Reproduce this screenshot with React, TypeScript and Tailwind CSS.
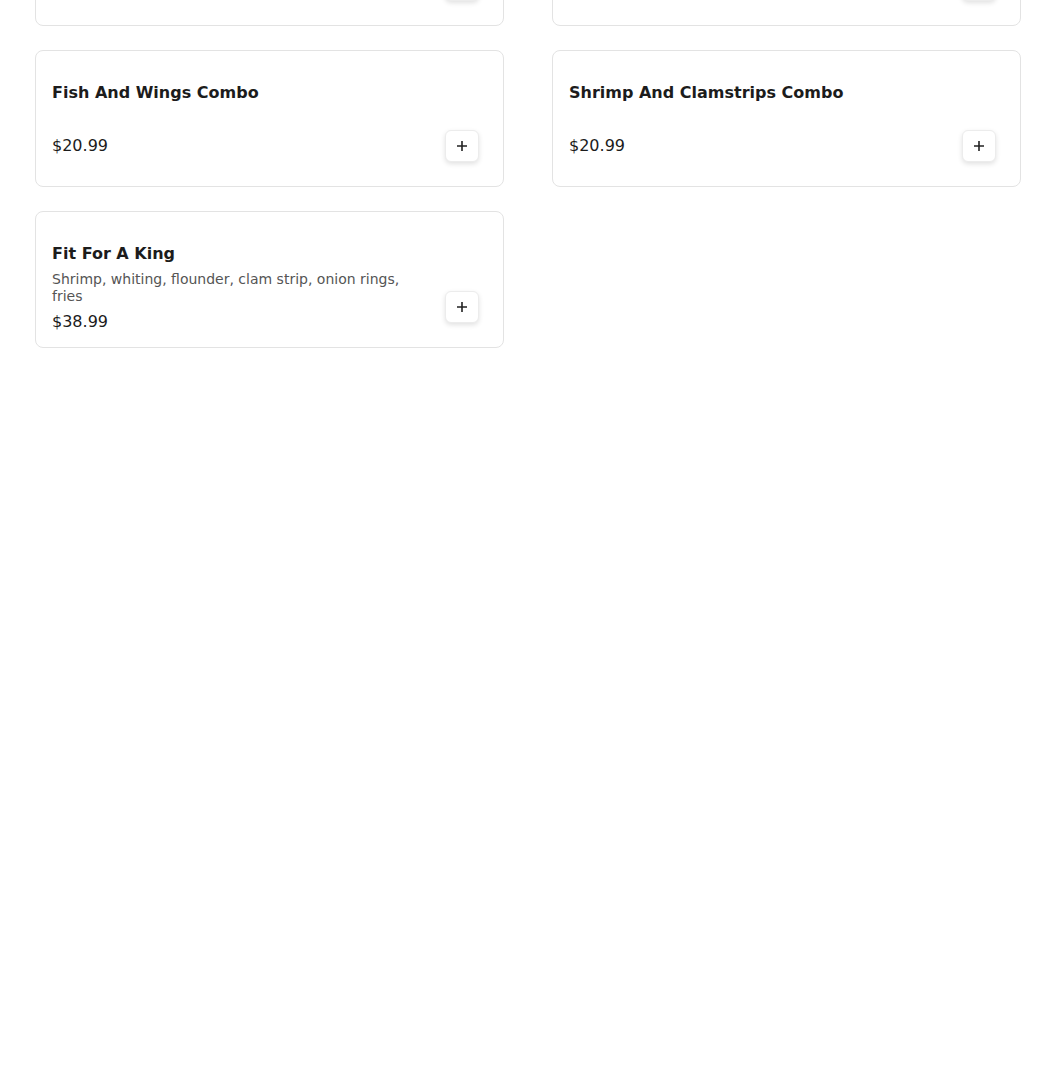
const items = [
  { name: "Shrimp And Fish Combo", desc: "", price: "$20.99" },
  { name: "Whiting And Wings Combo", desc: "", price: "$20.99" },
  { name: "Fish And Wings Combo", desc: "", price: "$20.99" },
  { name: "Shrimp And Clamstrips Combo", desc: "", price: "$20.99" },
  { name: "Fit For A King", desc: "Shrimp, whiting, flounder, clam strip, onion rings, fries", price: "$38.99" },
]

function AddButton() {
  return (
    <button
      type="button"
      className="w-[34px] h-8 shrink-0 rounded-md bg-white border border-[#ececec] shadow-[0_2px_5px_rgba(0,0,0,0.12)] flex items-center justify-center text-[#222]"
      aria-label="Add"
    >
      <svg width="12" height="12" viewBox="0 0 12 12" fill="none" stroke="currentColor" strokeWidth="1.6" aria-hidden="true">
        <path d="M6 1v10M1 6h10" />
      </svg>
    </button>
  )
}

export default function App() {
  return (
    <div className="min-h-screen bg-white font-['DejaVu_Sans',sans-serif] text-[#1c1c1c]">
      <div className="pl-[35px] -mt-[111px] grid grid-cols-[469px_469px] gap-x-12 gap-y-6">
        {items.map((item) => (
          <div
            key={item.name}
            className="h-[137px] rounded-lg border border-[#e3e3e3] bg-white flex justify-between pl-4 pr-6"
          >
            <div className="pt-[30px] flex flex-col">
              <h3 className="text-base leading-6 font-bold">{item.name}</h3>
              {item.desc && (
                <p className="mt-[5px] w-[360px] text-sm leading-[17px] text-[#555]">{item.desc}</p>
              )}
              <span className={item.desc ? "mt-[5px] text-base leading-6" : "mt-[29px] text-base leading-6"}>
                {item.price}
              </span>
            </div>
            <div className="flex items-end pb-6">
              <AddButton />
            </div>
          </div>
        ))}
      </div>
    </div>
  )
}
